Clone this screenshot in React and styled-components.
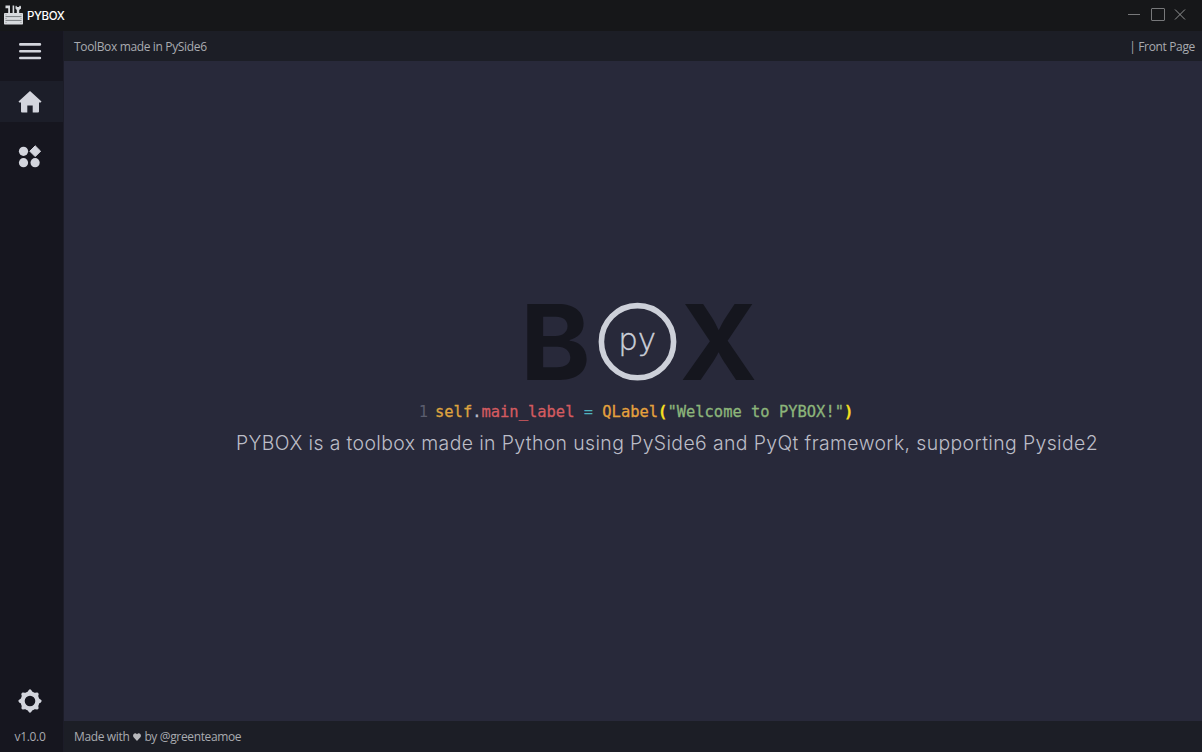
import React from "react";
import styled, { createGlobalStyle } from "styled-components";

const GlobalStyle = createGlobalStyle`
  * { box-sizing: border-box; }
  html, body, #root { height: 100%; margin: 0; }
  body { overflow: hidden; background: #16161f; font: 12px "Open Sans", "Noto Sans", sans-serif; color: #a9abb0; }
`;

const Window = styled.div`
  height: 100vh;
  display: flex;
  flex-direction: column;
`;

const TitleBar = styled.header`
  height: 31px;
  flex: none;
  display: flex;
  align-items: center;
  padding: 0 15px 1px 4px;
  background: #161719;
`;

const AppName = styled.h1`
  margin: 2px auto 0 4px;
  font: 500 11.5px/16px Inter, sans-serif;
  letter-spacing: -0.4px;
  color: #fff;
`;

const WindowControls = styled.div`
  display: flex;
  margin-top: -2px;
`;

const Body = styled.div`
  flex: 1;
  min-height: 0;
  display: flex;
`;

const SideBar = styled.nav`
  width: 64px;
  flex: none;
  display: flex;
  flex-direction: column;
  background: #16161f;
  border-right: 1px solid #1c1c28;
`;

const NavButton = styled.button`
  height: ${(p) => p.$height}px;
  padding: 0 3px 0 0;
  border: 0;
  display: flex;
  align-items: center;
  justify-content: center;
  color: #d3d5dd;
  background: ${(p) => (p.$active ? "#1c1e29" : "transparent")};
  margin-top: ${(p) => p.$top || 0};
`;

const Version = styled.div`
  height: 31px;
  padding: 0 3px 0 0;
  line-height: 32px;
  text-align: center;
  letter-spacing: -0.3px;
`;

const Main = styled.main`
  flex: 1;
  display: flex;
  flex-direction: column;
  background: #28293a;
`;

const Strip = styled.div`
  height: ${(p) => p.$height}px;
  flex: none;
  display: flex;
  justify-content: space-between;
  padding: 0 7px 0 10px;
  line-height: 32px;
  letter-spacing: ${(p) => p.$spacing}px;
  background: #1c1e26;
  white-space: pre;
`;

const Heart = styled.svg`
  margin: 0 3px 0 4px;
  vertical-align: 0;
`;

const FrontPage = styled.section`
  flex: 1;
  display: flex;
  flex-direction: column;
  align-items: center;
  padding-top: 206px;
`;

const Logo = styled.svg`
  flex: none;
  margin: 0 0 -30px 14px;
`;

const CodeLine = styled.code`
  margin: 7px 0 0 6px;
  font: 15.45px/24px "DejaVu Sans Mono", monospace;
  white-space: pre;
  -webkit-text-stroke: 0.3px;
`;

const Token = styled.span`
  color: ${(p) => p.$color};
  font-weight: ${(p) => (p.$bold ? 700 : 400)};
  -webkit-text-stroke-width: ${(p) => (p.$thin ? 0 : 0.3)}px;
`;

const LineNumber = styled.span`
  color: #5b5d6e;
  margin-right: 7px;
  -webkit-text-stroke: 0;
`;

const Tagline = styled.p`
  margin: 5px 0 0 68px;
  font: 300 19.4px/28px Inter, sans-serif;
  letter-spacing: 0.39px;
  color: #bcbdc7;
  white-space: nowrap;
`;

const ToolboxIcon = () => (
  <svg width="19" height="20" viewBox="0 0 19 20" fill="#d7dadd">
    <path d="M1.5.5H6V8H4.2V3.2H1.5zM8.6.5h1.6V8H8.6zM12 .5l1.2 1.6h1.6L16 .5l1 1v2L15.2 5v3h-2.4V5L11.5 3.5v-2z" />
    <rect y="8" width="19" height="11.5" rx="0.7" />
    <path d="M1.5 11.6h16M1.5 15.4h16" stroke="#777c7e" strokeWidth="1" />
    <path d="M1.5 9.7h1M16.5 9.7h1M1.5 13.5h1M16.5 13.5h1M1.5 17.5h1M16.5 17.5h1" stroke="#999" />
  </svg>
);

const MenuIcon = () => (
  <svg width="24" height="24" viewBox="0 0 24 24" stroke="currentColor" strokeWidth="2.6" strokeLinecap="round">
    <path d="M2.3 5.4h19.6M2.3 12.2h19.6M2.3 19h19.6" />
  </svg>
);

const HomeIcon = () => (
  <svg width="24" height="24" viewBox="0 0 24 24" fill="currentColor">
    <path d="M12 1L23.5 11.5 22.7 12.5H21V21.5q0 1-1 1H14.7V15.5H9.3V22.5H4q-1 0-1-1V12.5H1.3L.5 11.5z" />
  </svg>
);

const WidgetsIcon = () => (
  <svg width="24" height="24" viewBox="0 0 24 24" fill="currentColor">
    <circle cx="5.5" cy="7.3" r="4.6" />
    <circle cx="5.5" cy="18.7" r="4.6" />
    <circle cx="17.1" cy="18.7" r="4.6" />
    <path d="M17.2 1.8L22.6 7.2 17.2 12.6 11.8 7.2z" stroke="currentColor" strokeWidth="1" strokeLinejoin="round" />
  </svg>
);

const GearIcon = () => (
  <svg width="24" height="24" viewBox="0 0 24 24">
    <g fill="currentColor">
      {[0, 45, 90, 135, 180, 225, 270, 315].map((a) => (
        <path key={a} d="M8 5L10.8 1.1Q12 -.4 13.2 1.1L16 5z" transform={`rotate(${a} 12 12)`} />
      ))}
    </g>
    <circle cx="12" cy="12" r="7.4" fill="none" stroke="currentColor" strokeWidth="4.2" />
  </svg>
);

export default function App() {
  return (
    <>
      <GlobalStyle />
      <Window>
        <TitleBar>
          <ToolboxIcon />
          <AppName>PYBOX</AppName>
          <WindowControls>
            <svg width="60" height="16" viewBox="0 0 60 16" fill="none" stroke="#77787a">
              <path d="M1 8.5h12" />
              <rect x="24.5" y="2.5" width="13" height="12" rx=".5" />
              <path d="M48 3.5l10 10M58 3.5l-10 10" stroke="#929394" />
            </svg>
          </WindowControls>
        </TitleBar>
        <Body>
          <SideBar>
            <NavButton $height={40}><MenuIcon /></NavButton>
            <NavButton $height={41} $top="10px" $active><HomeIcon /></NavButton>
            <NavButton $height={40} $top="14px"><WidgetsIcon /></NavButton>
            <NavButton $height={40} $top="auto"><GearIcon /></NavButton>
            <Version>v1.0.0</Version>
          </SideBar>
          <Main>
            <Strip $height={30} $spacing={-0.35}>
              <span>ToolBox made in PySide6</span>
              <span>| Front Page</span>
            </Strip>
            <FrontPage>
              <Logo width="240" height="156" viewBox="0 -30 240 156">
                <g fill="#15161e" fontFamily="Inter, sans-serif" fontSize="104.5" fontWeight="700">
                  <text x="0.3" y="83.3" textLength="70.5" lengthAdjust="spacingAndGlyphs">B</text>
                  <text x="160" y="83.3">X</text>
                </g>
                <circle cx="117.5" cy="44.7" r="36.1" fill="none" stroke="#cdd0d9" strokeWidth="5.6" />
                <text x="117.2" y="53.4" textAnchor="middle" fill="#cdd0d9" stroke="#cdd0d9" strokeWidth="0.4" fontFamily="DejaVu Sans, sans-serif" fontSize="31" fontWeight="200">py</text>
              </Logo>
              <CodeLine>
                <LineNumber>1</LineNumber>
                <Token $color="#dfa33f">self</Token>
                <Token $color="#b9bdca">.</Token>
                <Token $color="#d45b60">main_label</Token>
                <Token $color="#4fb3bf" $thin> = </Token>
                <Token $color="#e5a13d">QLabel</Token>
                <Token $color="#f5df20" $bold>(</Token>
                <Token $color="#8cb57a">"Welcome to PYBOX!"</Token>
                <Token $color="#f5df20" $bold>)</Token>
              </CodeLine>
              <Tagline>PYBOX is a toolbox made in Python using PySide6 and PyQt framework, supporting Pyside2</Tagline>
            </FrontPage>
            <Strip $height={31} $spacing={-0.36}>
              <span>
                Made with
                <Heart width="8" height="8" viewBox="0 0 8 8" fill="#b7b8bc">
                  <path d="M4 8L.6 4.2C-1.2 1.8 2-1.5 4 1.3 6-1.5 9.2 1.8 7.4 4.2z" />
                </Heart>
                by @greenteamoe
              </span>
            </Strip>
          </Main>
        </Body>
      </Window>
    </>
  );
}
